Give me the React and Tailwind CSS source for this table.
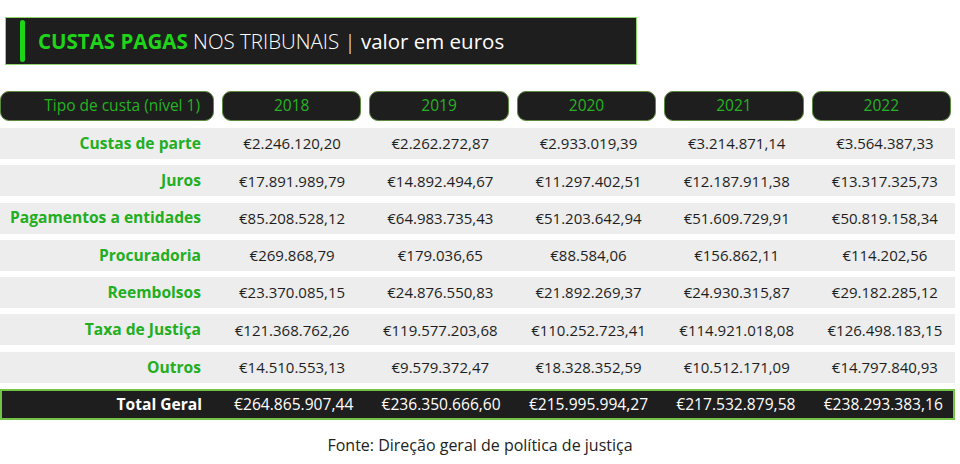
import React from 'react';

const anos = ['2018', '2019', '2020', '2021', '2022'];

const linhas = [
  { tipo: 'Custas de parte', valores: ['€2.246.120,20', '€2.262.272,87', '€2.933.019,39', '€3.214.871,14', '€3.564.387,33'] },
  { tipo: 'Juros', valores: ['€17.891.989,79', '€14.892.494,67', '€11.297.402,51', '€12.187.911,38', '€13.317.325,73'] },
  { tipo: 'Pagamentos a entidades', valores: ['€85.208.528,12', '€64.983.735,43', '€51.203.642,94', '€51.609.729,91', '€50.819.158,34'] },
  { tipo: 'Procuradoria', valores: ['€269.868,79', '€179.036,65', '€88.584,06', '€156.862,11', '€114.202,56'] },
  { tipo: 'Reembolsos', valores: ['€23.370.085,15', '€24.876.550,83', '€21.892.269,37', '€24.930.315,87', '€29.182.285,12'] },
  { tipo: 'Taxa de Justiça', valores: ['€121.368.762,26', '€119.577.203,68', '€110.252.723,41', '€114.921.018,08', '€126.498.183,15'] },
  { tipo: 'Outros', valores: ['€14.510.553,13', '€9.579.372,47', '€18.328.352,59', '€10.512.171,09', '€14.797.840,93'] },
];

const totais = ['€264.865.907,44', '€236.350.666,60', '€215.995.994,27', '€217.532.879,58', '€238.293.383,16'];

const grelha = 'grid grid-cols-[214px_repeat(5,1fr)] gap-x-2 items-center';

export default function App() {
  return (
    <div className="w-[960px] h-[464px] bg-white font-['Open_Sans',sans-serif] text-[#1e1e1e] overflow-hidden">
      <div className="pt-[17px] pl-[5px]">
        <div className="w-[632px] h-[48px] bg-[#1e1e1e] border border-[#8fd46b] flex items-center pl-[14px]">
          <div className="w-[5px] h-[42px] rounded-full bg-[#1fd51a]" />
          <h1 className="ml-[13px] text-[20.5px] leading-none text-white">
            <span className="font-bold text-[#1fd51a]">CUSTAS PAGAS</span>{' '}
            <span className="font-light">NOS TRIBUNAIS</span>{' '}
            <span className="font-light">|</span> valor em euros
          </h1>
        </div>
      </div>

      <div className="mt-[26px] w-[955px]">
        <div className={grelha + ' w-[951px]'}>
          <div className="h-[30px] rounded-[9px] bg-[#1e1e1e] border border-[#5d8a3c] flex items-center justify-end pr-[13px] text-[15.5px] text-[#27b323]">
            Tipo de custa (nível 1)
          </div>
          {anos.map((ano) => (
            <div key={ano} className="h-[30px] rounded-[9px] bg-[#1e1e1e] border border-[#5d8a3c] flex items-center justify-center text-[15.5px] text-[#27b323]">
              {ano}
            </div>
          ))}
        </div>

        <div className="mt-[7px] flex flex-col gap-[6.3px]">
          {linhas.map((linha) => (
            <div key={linha.tipo} className={grelha + ' h-[31px] bg-[#ededed] text-[15px]'}>
              <div className="text-right pr-[13px] font-bold text-[15.6px] text-[#22ae1f]">{linha.tipo}</div>
              {linha.valores.map((v, i) => (
                <div key={i} className="text-center">{v}</div>
              ))}
            </div>
          ))}
          <div className={grelha + ' h-[31px] bg-[#1e1e1e] border-2 border-[#72c446] text-[15.6px] text-white'}>
            <div className="text-right pr-[14px] font-bold">Total Geral</div>
            {totais.map((v, i) => (
              <div key={i} className="text-center">{v}</div>
            ))}
          </div>
        </div>
      </div>

      <p className="mt-[13px] text-center text-[16px] text-[#222]">Fonte: Direção geral de política de justiça</p>
    </div>
  );
}
